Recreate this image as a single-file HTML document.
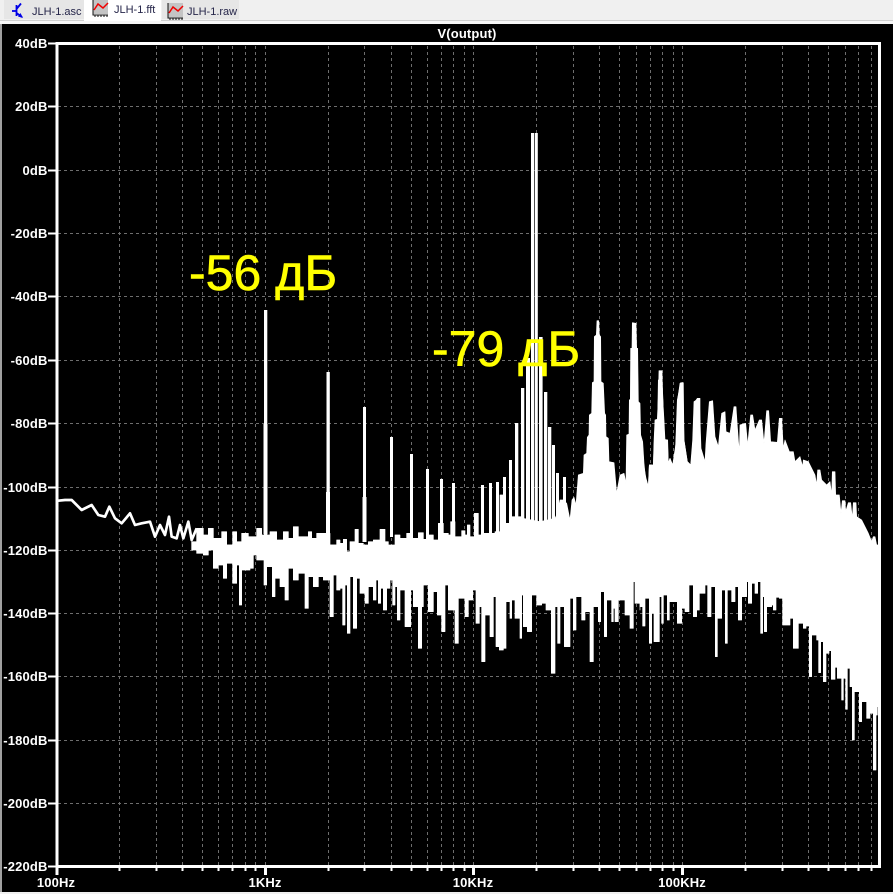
<!DOCTYPE html>
<html>
<head>
<meta charset="utf-8">
<style>
html,body{margin:0;padding:0;background:#000;}
body{width:893px;height:894px;overflow:hidden;position:relative;}
svg{display:block;position:absolute;left:0;top:0;}
.l{font:bold 13px "Liberation Sans",sans-serif;fill:#fff;letter-spacing:.15px;}
.t{font:11px "Liberation Sans",sans-serif;fill:#26264a;}
.y{font:50px "Liberation Sans","DejaVu Sans",sans-serif;fill:#ffff00;stroke:#ffff00;stroke-width:.6px;}
</style>
</head>
<body>
<svg width="893" height="894" viewBox="0 0 893 894" xmlns="http://www.w3.org/2000/svg">
<rect width="893" height="894" fill="#000"/>
<!-- chrome -->
<rect x="0" y="0" width="893" height="20" fill="#f0f0f0"/>
<rect x="0" y="20" width="893" height="1" fill="#d0d0d0"/>
<rect x="0" y="21" width="893" height="3" fill="#f6f6f6"/>
<rect x="0" y="24" width="2" height="868" fill="#a0a0a0"/>
<rect x="0" y="892" width="893" height="2" fill="#f0f0f0"/>
<!-- tabs -->
<rect x="4" y="0" width="80" height="19" fill="#e6e6e6"/>
<rect x="84" y="0" width="77" height="21" fill="#ffffff"/>
<rect x="162" y="0" width="77" height="19" fill="#e6e6e6"/>
<g fill="none" stroke="#0000e6" stroke-width="1.8">
<path d="M12 11H16M16.500 5V16M16.500 9L21 3.500M16.500 13L22 17"/>
</g>
<path d="M23 18L18 16.500L20.500 13Z" fill="#0000e6"/>
<g>
<rect x="93" y="0" width="15" height="14" fill="#c4c4c4"/>
<path d="M93 0V15H108M95 15V17M98 15V17M101 15V17M104 15V17M107 15V17" stroke="#111" fill="none"/>
<path d="M94 10L98 4L103 8L108 3" stroke="#f00000" stroke-width="1.500" fill="none"/>
</g>
<g transform="translate(75,3)">
<rect x="93" y="0" width="15" height="14" fill="#c4c4c4"/>
<path d="M93 0V15H108M95 15V17M98 15V17M101 15V17M104 15V17M107 15V17" stroke="#111" fill="none"/>
<path d="M94 10L98 4L103 8L108 3" stroke="#f00000" stroke-width="1.500" fill="none"/>
</g>
<text class="t" x="32" y="15">JLH-1.asc</text>
<text class="t" x="114" y="13">JLH-1.fft</text>
<text class="t" x="187" y="15">JLH-1.raw</text>

<!-- grid -->
<g stroke="#6e6e6e" stroke-width="1" stroke-dasharray="3 3" fill="none">
<path d="M119.500 46V865M156.500 46V865M182.500 46V865M202.500 46V865M218.500 46V865M232.500 46V865M245.500 46V865M255.500 46V865M265.500 46V865M328.500 46V865M364.500 46V865M391.500 46V865M411.500 46V865M427.500 46V865M441.500 46V865M453.500 46V865M464.500 46V865M473.500 46V865M536.500 46V865M573.500 46V865M599.500 46V865M619.500 46V865M636.500 46V865M650.500 46V865M662.500 46V865M673.500 46V865M682.500 46V865M745.500 46V865M782.500 46V865M808.500 46V865M828.500 46V865M845.500 46V865M858.500 46V865M871.500 46V865"/>
<path d="M58 106.500H878M58 170.500H878M58 233.500H878M58 296.500H878M58 360.500H878M58 423.500H878M58 487.500H878M58 550.500H878M58 613.500H878M58 676.500H878M58 740.500H878M58 803.500H878"/>
</g>

<!-- spectrum -->
<g fill="#fff" stroke="#fff" stroke-linejoin="round">
<g transform="translate(40,470) scale(.33333)">
<polyline fill="none" stroke-width="8" points="55,92 75,90 95,90 125,120 155,105 175,135 195,140 208,110 225,145 245,160 270,130 285,165 305,160 330,155 345,200 360,165 375,195 387,140 395,200 410,205 420,165 430,205 445,155 455,210 470,175"/>
<path stroke-width="2" d="M455 240V215H470V175H490V195H505V175H520V205H545V185H560V225H578V185H590V215H605V190H625V200H650V175H665V195H690V185H710V210H730V185H745V205H760V170H775V200H805V185H815V205H830V190H855V190H870V225H890V210H900V240Z"/>
<path stroke-width="2" d="M470 225V250H490V255H505V235H520V295H535V285H550V325H560V280H578V340H590V285H598V405H605V300H630V295H640V255H650V270H672V345H680V290H697V380H705V325H720V350H735V390H745V295H760V330H775V310H795V415H805V320H820V350H835V320H850V330H870V440H880V315H890V360H900V225Z"/>
</g>
<g transform="translate(340,380) scale(.33333)">
<path stroke-width="2" d="M0 520V490H10V478H20V515H30V485H45V448H55V490H70V495H85V485H100V480H120V448H135V485H145V495H165V465H180V475H200V460H215V475H235V458H250V478H265V465H280V480H295V430H310V460H325V465H332V425H345V470H365V452H375V465H382V435H390V470H403V400H415V465H430V460H450V460H465V455H480V345H490V430H510V410H530V410H550V450H555V520Z"/>
<path stroke-width="2" d="M0 520V625H8V735H15V615H22V760H30V590H40V745H50V595H60V640H75V670H85V620H100V660H108V600H115V670H122V625H130V690H140V625H150V600H158V675H165V620H172V720H180V630H195V740H212V630H220V680H235V805H245V680H250V615H265V695H280V635H292V705H305V755H315V615H325V690H335V690H345V790H355V655H375V710H385V660H398V630H408V730H418V680H425V845H435V705H450V770H460V650H468V800H478V810H490V805H498V665H510V715H515V660H525V715H540V775H545V645H550V740H562V755H575V645H590V675H605V670H618V690H634V880H645V680H653V790H660V680H673V800H690V655H700V750H708V650H725V720H735V695H750V845H760V680H775V725H782V635H793V770H800V660H815V725H820V685H825V725H835V660H855V705H870V745H880V605H885V670H900V690V520Z"/>
</g>
<g transform="translate(500,300) scale(.33333)">
<polygon stroke-width="2" points="69,655 120,665 165,655 172,640 180,600 190,600 200,610 210,660 216,600 222,592 228,615 235,525 250,520 252,465 260,460 262,412 267,405 268,345 275,340 277,248 282,245 283,110 289,105 291,62 296,62 298,105 302,110 303,245 310,250 314,340 317,345 318,410 325,415 327,485 342,488 350,580 360,525 372,520 378,550 380,405 387,402 388,300 391,298 392,145 396,145 397,68 408,70 410,145 413,145 415,305 420,310 422,405 428,425 432,490 436,530 445,560 448,495 458,495 458,565 462,425 465,360 472,358 475,295 477,212 486,212 488,295 492,360 495,420 503,420 505,490 510,475 518,495 528,430 533,300 540,250 548,250 552,420 562,485 572,495 578,460 585,305 592,295 600,295 600,760 69,760"/>
</g>
<g transform="translate(640,380) scale(.33333)">
<polygon stroke-width="2" points="0,165 10,250 18,295 25,320 28,255 37,255 37,325 43,185 46,120 53,118 55,0 66,0 69,60 72,178 82,180 85,250 90,235 97,255 105,250 112,60 122,8 130,8 132,180 142,245 152,255 158,180 162,65 178,55 183,205 195,245 198,190 208,65 218,62 225,170 235,200 245,100 255,95 258,155 270,160 282,80 288,80 292,140 298,220 300,135 317,130 323,195 332,105 338,105 345,150 358,120 365,120 372,190 380,92 386,92 392,185 412,187 418,115 425,115 430,205 435,180 448,215 460,215 465,245 480,230 488,260 490,240 505,245 525,285 530,315 533,270 540,270 545,300 560,315 570,305 575,345 577,275 585,275 587,345 598,345 603,400 607,362 615,362 617,395 625,368 632,368 637,415 640,368 648,368 650,410 665,420 675,440 685,460 695,485 700,470 705,470 710,495 714,495 714,520 0,520"/>
<path stroke-width="2" d="M0 520V680H8V738H15V655H28V790H35V700H42V785H58V650H65V730H70V645H82V720H88V665H112V730H125V685H135V695H147V615H160V710H170V690H178V640H195V615H203V710H213V620H226V830H232V715H245V630H256V790H262V630H275V665H285V620H295V720H305V650H320V605H325V670H335V610H345V640H353V605H362V760H368V650H373V755H380V680H395V675H400V690H408V652H418V655H428V735H450V715H460V805H475V730H490V745H498V738H508V890H515V765H530V780H536V878H542V785H550V905H558V820H567V812H574V898H585V862H592V895H605V960H610V895H617V988H622V865H630V920H637V1080H643V935H658V1025H665V965H680V1015H690V1000H700V1170H708V1005H712V980H714V520Z"/>
</g>
</g>
<!-- harmonic spikes -->
<g fill="#fff">
<rect x="264" y="310" width="3.300" height="225"/><rect x="263.500" y="424" width="4" height="110"/>
<rect x="326.500" y="372" width="3.300" height="165"/><rect x="326" y="492" width="4" height="45"/>
<rect x="363" y="407" width="3" height="135"/><rect x="362.500" y="497" width="4" height="45"/>
<rect x="390" y="437" width="3" height="100"/>
<rect x="410" y="454" width="3" height="85"/>
<rect x="426" y="469" width="3" height="70"/>
<rect x="440" y="479" width="3" height="60"/>
<rect x="452" y="483" width="3" height="55"/>
<rect x="481" y="485" width="3" height="50"/>
<rect x="489" y="483" width="3" height="50"/>
<rect x="496" y="482" width="3" height="50"/>
<rect x="503" y="477" width="3" height="50"/>
<rect x="509" y="460" width="3" height="65"/>
<rect x="515" y="423" width="3.300" height="100"/>
<rect x="521" y="388" width="3.300" height="135"/>
<rect x="526" y="358" width="4" height="165"/>
<rect x="531" y="133" width="3.300" height="395"/>
<rect x="535" y="133" width="2.800" height="395"/>
<rect x="539" y="337" width="3.600" height="190"/>
<rect x="544" y="392" width="3.300" height="135"/>
<rect x="548" y="427" width="3.300" height="100"/>
<rect x="552" y="445" width="3" height="80"/>
<rect x="556" y="473" width="3" height="50"/>
<rect x="563" y="477" width="3" height="46"/>
</g>

<!-- axes -->
<g fill="#fff">
<rect x="55.500" y="42" width="3" height="825"/>
<rect x="55.500" y="42" width="825" height="3"/>
<rect x="55.500" y="865" width="825" height="3"/>
<rect x="878" y="42" width="3" height="826"/>
</g>
<path stroke="#fff" stroke-width="2" fill="none" d="M48 43.500H56M48 106.500H56M48 170.500H56M48 233.500H56M48 296.500H56M48 360.500H56M48 423.500H56M48 487.500H56M48 550.500H56M48 613.500H56M48 676.500H56M48 740.500H56M48 803.500H56M48 866.500H56"/>
<path stroke="#fff" stroke-width="2" fill="none" d="M119.500 867V871M156.500 867V871M182.500 867V871M202.500 867V871M218.500 867V871M232.500 867V871M245.500 867V871M255.500 867V871M328.500 867V871M364.500 867V871M391.500 867V871M411.500 867V871M427.500 867V871M441.500 867V871M453.500 867V871M464.500 867V871M536.500 867V871M573.500 867V871M599.500 867V871M619.500 867V871M636.500 867V871M650.500 867V871M662.500 867V871M673.500 867V871M745.500 867V871M782.500 867V871M808.500 867V871M828.500 867V871M845.500 867V871M858.500 867V871M871.500 867V871"/>
<path stroke="#fff" stroke-width="3" fill="none" d="M57 867V875M265.500 867V875M473.500 867V875M682.500 867V875"/>

<!-- labels -->
<text class="l" x="467" y="38" text-anchor="middle">V(output)</text>
<g text-anchor="end">
<text class="l" x="47.500" y="48">40dB</text>
<text class="l" x="47.500" y="111">20dB</text>
<text class="l" x="47.500" y="175">0dB</text>
<text class="l" x="47.500" y="238">-20dB</text>
<text class="l" x="47.500" y="301">-40dB</text>
<text class="l" x="47.500" y="365">-60dB</text>
<text class="l" x="47.500" y="428">-80dB</text>
<text class="l" x="47.500" y="492">-100dB</text>
<text class="l" x="47.500" y="555">-120dB</text>
<text class="l" x="47.500" y="618">-140dB</text>
<text class="l" x="47.500" y="681">-160dB</text>
<text class="l" x="47.500" y="745">-180dB</text>
<text class="l" x="47.500" y="808">-200dB</text>
<text class="l" x="47.500" y="871">-220dB</text>
</g>
<g text-anchor="middle">
<text class="l" x="56" y="887">100Hz</text>
<text class="l" x="265" y="887">1KHz</text>
<text class="l" x="473" y="887">10KHz</text>
<text class="l" x="682" y="887">100KHz</text>
</g>
<text class="y" x="189" y="290">-56 дБ</text>
<text class="y" x="432" y="366">-79 дБ</text>
</svg>
</body>
</html>
